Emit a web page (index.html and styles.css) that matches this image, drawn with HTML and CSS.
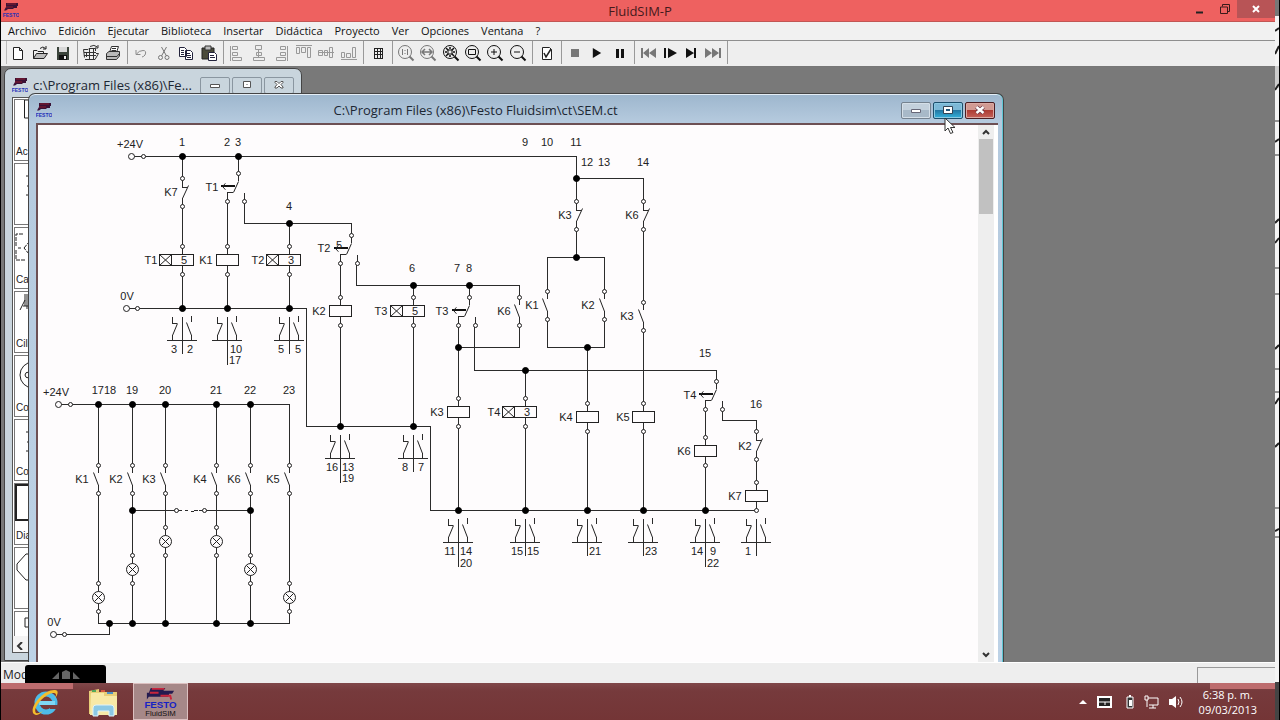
FILE: index.html
```html
<!DOCTYPE html>
<html lang="es">
<head>
<meta charset="utf-8">
<title>FluidSIM-P</title>
<link rel="stylesheet" href="styles.css">
</head>
<body>
<svg class="defs" aria-hidden="true">
  <defs>
    <symbol id="logo" viewBox="0 0 16 16">
      <path d="M3 1H15V4H14V6H11L10 7H5L3 8.500H1L3 5Z" fill="#3a1236"/>
      <path d="M4 2H13M3 5H10" stroke="#8a1c2c" stroke-width="1"/>
      <text x="8" y="15" text-anchor="middle" class="logo-text">FESTO</text>
    </symbol>
    <symbol id="i-new" viewBox="0 0 18 18"><path d="M4.500 3.500H10.500L13.500 6.500V15.500H4.500ZM10.500 3.500V6.500H13.500" fill="#fff" stroke="#222"/></symbol>
    <symbol id="i-open" viewBox="0 0 18 18"><path d="M2.500 14.500V6.500H6L7 7.500H12.500V9.500" fill="#eee" stroke="#222"/><path d="M2.500 14.500L5.500 9.500H16.500L13 14.500Z" fill="#bbb" stroke="#222"/><path d="M9 4.500Q12 1.500 14.500 4.500M15 2V5H12" fill="none" stroke="#222"/></symbol>
    <symbol id="i-save" viewBox="0 0 18 18"><path d="M3 3H15V16H3Z" fill="#3b443b"/><path d="M5 3H13V8H5Z" fill="#d8d8d8"/><path d="M5 11H13V16H5Z" fill="#111"/><path d="M10 12H12V15H10Z" fill="#eee"/></symbol>
    <symbol id="i-lib" viewBox="0 0 18 18"><path d="M2.500 13.500L1.500 5.500H6L7 4.500H13.500V7M4.500 8V13M7.500 5V16M11.500 5V16M2 8.500H14M2 11.500H14" fill="none" stroke="#333"/><path d="M3 15.500H13L16.500 9.500H14" fill="none" stroke="#333"/><path d="M8 2.500Q12 0 15.500 3M16 1V4H13" fill="none" stroke="#333"/></symbol>
    <symbol id="i-print" viewBox="0 0 18 18"><path d="M5.500 8.500L7.500 2.500H14.500L12.500 8.500" fill="#fff" stroke="#333"/><path d="M2.500 9.500L5 7.500H15.500V12L12.500 15.500H2.500Z" fill="#bbb" stroke="#333"/><path d="M3 12.500H13L15 10M8 4.500H12M7.500 6.500H12" stroke="#333" fill="none"/></symbol>
    <symbol id="i-undo" viewBox="0 0 18 18"><path d="M4 6V10.500H8.500M4.500 10Q7 6.500 11 6.500T13 11Q12 12.500 10 13" fill="none" stroke="#8a8a8a"/></symbol>
    <symbol id="i-cut" viewBox="0 0 18 18"><path d="M6.500 3L11.500 12M11.500 3L6.500 12" fill="none" stroke="#777"/><circle cx="5.500" cy="13.500" r="2" fill="none" stroke="#777"/><circle cx="12" cy="13.500" r="2" fill="none" stroke="#777"/></symbol>
    <symbol id="i-copy" viewBox="0 0 18 18"><path d="M2.500 3.500H7.500L9.500 5.500V12.500H2.500ZM8.500 6.500H13.500L15.500 8.500V15.500H8.500Z" fill="#fff" stroke="#23233c"/><path d="M4 6.500H7M4 8.500H7M4 10.500H7M10 9.500H13M10 11.500H14M10 13.500H14" stroke="#23233c"/></symbol>
    <symbol id="i-paste" viewBox="0 0 18 18"><path d="M2 4H14V15H2Z" fill="#4a4a3a" stroke="#222"/><path d="M5 2H11V6H5Z" fill="#bbb" stroke="#333"/><path d="M8.500 8.500H14.500L16.500 10.500V16.500H8.500Z" fill="#fff" stroke="#23233c"/><path d="M10 11.500H14M10 13.500H15" stroke="#23233c"/></symbol>
    <symbol id="i-al" viewBox="0 0 18 18"><path d="M2.500 2V17M4.500 2.500H9.500V5.500H4.500ZM4.500 8.500H9.500V11.500H4.500ZM4.500 13.500H13.500V16.500H4.500Z" fill="none" stroke="#999"/></symbol>
    <symbol id="i-ac" viewBox="0 0 18 18"><path d="M8.500 5V14M5.500 1.500H11.500V5.500H5.500ZM6.500 8.500H11.500V11.500H6.500ZM3.500 13.500H14.500V16.500H3.500Z" fill="none" stroke="#999"/></symbol>
    <symbol id="i-ar" viewBox="0 0 18 18"><path d="M14.500 2V17M7.500 2.500H12.500V5.500H7.500ZM7.500 8.500H12.500V11.500H7.500ZM3.500 13.500H12.500V16.500H3.500Z" fill="none" stroke="#999"/></symbol>
    <symbol id="i-at" viewBox="0 0 18 18"><path d="M1 1.500H17M1.500 3.500H4.500V9.500H1.500ZM6.500 3.500H10.500V8.500H6.500ZM12.500 3.500H15.500V13.500H12.500Z" fill="none" stroke="#999"/></symbol>
    <symbol id="i-am" viewBox="0 0 18 18"><path d="M1 8.500H17M1.500 6.500H5.500V11.500H1.500ZM7.500 6.500H10.500V11.500H7.500ZM12.500 3.500H15.500V13.500H12.500Z" fill="none" stroke="#999"/></symbol>
    <symbol id="i-ab" viewBox="0 0 18 18"><path d="M1 15.500H17M1.500 8.500H4.500V13.500H1.500ZM6.500 9.500H10.500V13.500H6.500ZM12.500 3.500H15.500V13.500H12.500Z" fill="none" stroke="#999"/></symbol>
    <symbol id="i-grid" viewBox="0 0 18 18"><path d="M5.500 4V15M8.500 4V15M11.500 4V15M13.500 4V15M5 4.500H14M5 7.500H14M5 10.500H14M5 14.500H14" stroke="#222"/></symbol>
    <symbol id="lens" viewBox="0 0 18 18"><circle cx="8" cy="8" r="6.500" fill="none" stroke="currentColor"/><path d="M12.500 12.500L16.500 16.500" stroke="currentColor" stroke-width="2"/></symbol>
    <symbol id="arrow" viewBox="0 0 10 12"><path d="M0 0L10 6L0 12Z" fill="currentColor"/></symbol>
    <!-- circuit parts; each origin is the upper (or lower left) terminal -->
    <circle id="ring" r="2" class="port"/>
    <circle id="feed" r="3" class="port"/>
    <circle id="dot" r="3" class="node"/>
    <g id="no"><path class="wire" d="M0 0V8M0 20V28"/><path class="fine" d="M-5 7L0 20"/><use href="#ring"/><use href="#ring" y="28"/></g>
    <g id="nc"><path class="wire" d="M0 0V9H5M0 20V28"/><path class="fine" d="M6 7L0 20"/><use href="#ring"/><use href="#ring" y="28"/></g>
    <g id="ends"><path class="wire" d="M0 -14V14"/><use href="#ring" y="-14"/><use href="#ring" y="14"/></g>
    <g id="coil"><use href="#ends"/><path class="part" d="M-11 -6H11V5H-11Z"/></g>
    <g id="tcoil"><use href="#ends"/><path class="part" d="M-23 -6H11V5H-23ZM-11 -6V5"/><path class="fine" d="M-23 -6L-11 5M-11 -6L-23 5"/></g>
    <g id="tcon"><path class="wire" d="M11 -28V-20M6 -9H0V0M17 -8V0"/><path class="fine" d="M11 -20L6 -9"/><path class="bar" d="M-6 -15H8"/><path class="fine" d="M-2 -18Q-7 -15 -2 -12"/><use href="#ring"/><use href="#ring" x="17"/><use href="#ring" x="11" y="-28"/></g>
    <g id="lamp"><use href="#ends"/><circle class="port" r="6"/><path class="fine" d="M-4 -4L4 4M4 -4L-4 4"/></g>
    <g id="xref"><path class="wire" d="M0 9V46M-15 32H15M-10 9V15H-5M-10 27V32M9 27V32M9 8V14"/><path class="fine" d="M-5 15L-10 27M4 14L9 27"/></g>
    <g id="xrefl"><use href="#xref"/><path class="wire" d="M0 46V57"/></g>
  </defs>
</svg>

<div class="desktop">
  <main class="app">
    <header class="titlebar">
      <svg class="logo"><use href="#logo"/></svg>
      <h1>FluidSIM-P</h1>
      <div class="caption">
        <button aria-label="Minimizar"><svg width="10" height="10"><path d="M1 8.500H8" stroke="#222" stroke-width="2"/></svg></button>
        <button aria-label="Restaurar"><svg width="12" height="12"><path d="M1.500 4H8.500V10.500H1.500ZM3.500 3.500V1.500H10.500V8.500H9" fill="none" stroke="#3a1a1a"/></svg></button>
        <button class="close" aria-label="Cerrar"><svg width="10" height="10"><path d="M2 2L8 8M8 2L2 8" stroke="#fff" stroke-width="2"/></svg></button>
      </div>
    </header>
    <nav class="menubar">
      <button>Archivo</button><button>Edición</button><button>Ejecutar</button><button>Biblioteca</button><button>Insertar</button><button>Didáctica</button><button>Proyecto</button><button>Ver</button><button>Opciones</button><button>Ventana</button><button>?</button>
    </nav>
    <div class="toolbar">
      <div class="group g3 first"><button aria-label="Nuevo"><svg><use href="#i-new"/></svg></button><button aria-label="Abrir"><svg><use href="#i-open"/></svg></button><button aria-label="Guardar"><svg><use href="#i-save"/></svg></button></div>
      <div class="group g2"><button aria-label="Vista previa"><svg><use href="#i-lib"/></svg></button><button aria-label="Imprimir"><svg><use href="#i-print"/></svg></button></div>
      <div class="group g4"><button aria-label="Deshacer"><svg><use href="#i-undo"/></svg></button><button aria-label="Cortar"><svg><use href="#i-cut"/></svg></button><button aria-label="Copiar"><svg><use href="#i-copy"/></svg></button><button aria-label="Pegar"><svg><use href="#i-paste"/></svg></button></div>
      <div class="group g6"><button aria-label="Alinear izquierda"><svg><use href="#i-al"/></svg></button><button aria-label="Centrar"><svg><use href="#i-ac"/></svg></button><button aria-label="Alinear derecha"><svg><use href="#i-ar"/></svg></button><button aria-label="Alinear arriba"><svg><use href="#i-at"/></svg></button><button aria-label="Alinear al medio"><svg><use href="#i-am"/></svg></button><button aria-label="Alinear abajo"><svg><use href="#i-ab"/></svg></button></div>
      <div class="group g1"><button aria-label="Cuadrícula"><svg><use href="#i-grid"/></svg></button></div>
      <div class="group g6">
        <button class="off" aria-label="Escala 1:1"><svg viewBox="0 0 18 18"><use href="#lens"/><path d="M5.500 5V11M10.500 5V11M8 6V7M8 9V10" stroke="currentColor"/></svg></button>
        <button class="off" aria-label="Zoom anterior"><svg viewBox="0 0 18 18"><use href="#lens"/><path d="M3 8H13M6 5L3 8L6 11M10 5L13 8L10 11" fill="none" stroke="currentColor" stroke-width="1.500"/></svg></button>
        <button aria-label="Ajustar"><svg viewBox="0 0 18 18"><use href="#lens"/><path d="M4 4L12 12M12 4L4 12M3 8H5M11 8H13M8 3V5M8 11V13" stroke="currentColor" stroke-width="1.500"/><path d="M6 6H10V10H6Z" fill="#eee" stroke="currentColor"/></svg></button>
        <button aria-label="Zoom a zona"><svg viewBox="0 0 18 18"><use href="#lens"/><path d="M4.500 5.500H11.500V10.500H4.500Z" fill="none" stroke="currentColor"/></svg></button>
        <button aria-label="Acercar"><svg viewBox="0 0 18 18"><use href="#lens"/><path d="M5 8H11M8 5V11" stroke="currentColor"/></svg></button>
        <button aria-label="Alejar"><svg viewBox="0 0 18 18"><use href="#lens"/><path d="M5 8H11" stroke="currentColor"/></svg></button>
      </div>
      <div class="group g1"><button aria-label="Comprobar"><svg viewBox="0 0 18 18"><path d="M4.500 3.500H11.500L13.500 5.500V15.500H4.500Z" fill="#fff" stroke="#222"/><path d="M6 9L8 13L13 5" fill="none" stroke="#222" stroke-width="1.500"/></svg></button></div>
      <div class="group g3b">
        <button class="off" aria-label="Parar"><svg viewBox="0 0 18 18"><path d="M5 5H13V13H5Z" fill="currentColor"/></svg></button>
        <button aria-label="Iniciar"><svg viewBox="0 0 18 18"><use href="#arrow" x="4" y="4" width="10" height="10"/></svg></button>
        <button aria-label="Pausa"><svg viewBox="0 0 18 18"><path d="M5 5H8V14H5ZM10 5H13V14H10Z" fill="currentColor"/></svg></button>
      </div>
      <div class="group g4b">
        <button class="off" aria-label="Reiniciar"><svg viewBox="0 0 18 18"><path d="M2 4H4V14H2ZM10 4V14L4 9ZM17 4V14L10 9Z" fill="currentColor"/></svg></button>
        <button aria-label="Paso"><svg viewBox="0 0 18 18"><path d="M3 4H5V14H3ZM7 4V14L16 9Z" fill="currentColor"/></svg></button>
        <button aria-label="Hasta cambio"><svg viewBox="0 0 18 18"><path d="M4 4V14L12 9ZM12 4H14V14H12Z" fill="currentColor"/></svg></button>
        <button class="off" aria-label="Siguiente"><svg viewBox="0 0 18 18"><path d="M1 4V14L8 9ZM8 4V14L15 9ZM15 4H17V14H15Z" fill="currentColor"/></svg></button>
      </div>
    </div>

    <section class="mdi">
      <section class="window palette">
        <header>
          <svg class="logo"><use href="#logo"/></svg>
          <h2>c:\Program Files (x86)\Fe...</h2>
          <div class="wbuttons">
            <button aria-label="Minimizar"><svg width="12" height="8"><path d="M1.500 3.500H10.500V6.500H1.500Z" fill="#fff" stroke="#555"/></svg></button>
            <button aria-label="Maximizar"><svg width="12" height="10"><path d="M2.500 1.500H9.500V7.500H2.500ZM5.500 4.500H6.500" fill="#fff" stroke="#555"/></svg></button>
            <button aria-label="Cerrar"><svg width="12" height="10"><path d="M2 1.500H4L6 3.500L8 1.500H10V2.500L8 4.500L10 7V8H8L6 6L4 8H2V7L4 4.500L2 2.500Z" fill="#fff" stroke="#555"/></svg></button>
          </div>
        </header>
        <div class="client">
          <ul>
            <li><svg viewBox="0 0 60 44"><path d="M9.500 0V18H40V0Z"/></svg><span>Ac</span></li>
            <li><svg viewBox="0 0 60 44"><path d="M11 12H20M12 22H20M11 31H20"/></svg></li>
            <li><svg viewBox="0 0 60 44"><path d="M8 6H1V18M1 22V32H10M3 20H6M9 20L14 14V26Z" stroke-dasharray="4 1"/></svg><span>Ca</span></li>
            <li><svg viewBox="0 0 60 44"><path d="M9 3H14M10 4V14M12 4V17M8 14H14M5 18L10 8"/></svg><span>Cili</span></li>
            <li><svg viewBox="0 0 60 44"><circle cx="18" cy="19" r="13"/><path d="M14 16Q10 16 10 19T14 22"/></svg><span>Co</span></li>
            <li><svg viewBox="0 0 60 44"><path d="M11 12H20M12 22H20M11 31H20"/></svg><span>Co</span></li>
            <li class="picked"><svg viewBox="0 0 60 44"><path d="M1 1H50V36H1Z" stroke-width="2"/></svg><span>Dia</span></li>
            <li><svg viewBox="0 0 60 44"><path d="M20 6H11L2 16V22L11 32H20"/></svg></li>
            <li><svg viewBox="0 0 60 44"><path d="M20 6H10V15H20"/></svg></li>
          </ul>
          <button class="scroll-left" aria-label="Desplazar a la izquierda"><svg width="8" height="8"><path d="M6 0L2 4L6 8" fill="none" stroke="#333" stroke-width="2"/></svg></button>
        </div>
      </section>

      <section class="window main">
        <header>
          <svg class="logo"><use href="#logo"/></svg>
          <h2>C:\Program Files (x86)\Festo Fluidsim\ct\SEM.ct</h2>
          <div class="wbuttons">
            <button aria-label="Minimizar"><svg width="12" height="8"><path d="M1.500 3.500H10.500V6.500H1.500Z" fill="#fff" stroke="#667"/></svg></button>
            <button class="hot" aria-label="Maximizar"><svg width="12" height="10"><path d="M1.500 1.500H10.500V8.500H1.500Z" fill="#fff" stroke="#345"/><path d="M4 4H8V6H4Z" fill="#257"/></svg></button>
            <button class="close" aria-label="Cerrar"><svg width="12" height="10"><path d="M2.500 2L9.500 8M9.500 2L2.500 8" stroke="#634" stroke-width="4"/><path d="M2.500 2L9.500 8M9.500 2L2.500 8" stroke="#fff" stroke-width="2.500"/></svg></button>
          </div>
        </header>
        <div class="client">
          <div class="sheet">
            <svg class="circuit" viewBox="38 125 942 537" role="img" aria-label="Circuito eléctrico">
              <path class="wire" d="M131 156H576V178H643V201M182 156V178M182 206V308M238 156V173M227 201V308M244 201V223H351V235M289 223V308M126 308H306V426H430V510H756V482M340 263V426M356 263V285H519V297M413 285V426M469 285V297M519 325V347H458M458 325V510M474 325V370H716V381M525 370V510M576 178V201M576 229V257M547 291V257H604V291M547 319V347H604V319M587 347V510M643 229V302M643 330V510M705 409V510M722 409V420H756V431M756 459V482"/>
              <path class="wire" d="M58 404H289V465M98 404V465M132 404V465M165 404V465M216 404V465M250 404V465M98 493V623H289V493M132 493V623M165 493V623M216 493V623M250 493V623M53 634H109V623M132 510H182M185 510H188M191 511H194M194 510H198M199 510H250"/>
              <use href="#feed" x="131" y="156"/><use href="#ring" x="143" y="156"/>
              <use href="#feed" x="126" y="308"/><use href="#ring" x="137" y="308"/>
              <use href="#feed" x="58" y="404"/><use href="#ring" x="70" y="404"/>
              <use href="#feed" x="53" y="634"/><use href="#ring" x="64" y="634"/>
              <use href="#ring" x="176" y="510"/><use href="#ring" x="204" y="510"/>
              <use href="#nc" x="182" y="178"/><use href="#nc" x="576" y="201"/><use href="#nc" x="643" y="201"/><use href="#nc" x="756" y="431"/>
              <use href="#no" x="519" y="297"/><use href="#no" x="547" y="291"/><use href="#no" x="604" y="291"/><use href="#no" x="643" y="302"/>
              <use href="#no" x="98" y="465"/><use href="#no" x="132" y="465"/><use href="#no" x="165" y="465"/><use href="#no" x="216" y="465"/><use href="#no" x="250" y="465"/><use href="#no" x="289" y="465"/>
              <use href="#tcon" x="227" y="201"/><use href="#tcon" x="340" y="263"/><use href="#tcon" x="458" y="325"/><use href="#tcon" x="705" y="409"/>
              <use href="#tcoil" x="182" y="260"/><use href="#tcoil" x="289" y="260"/><use href="#tcoil" x="413" y="311"/><use href="#tcoil" x="525" y="412"/>
              <use href="#coil" x="227" y="260"/><use href="#coil" x="340" y="311"/><use href="#coil" x="458" y="412"/><use href="#coil" x="587" y="417"/><use href="#coil" x="643" y="417"/><use href="#coil" x="705" y="451"/><use href="#coil" x="756" y="496"/>
              <use href="#lamp" x="98" y="597"/><use href="#lamp" x="132" y="569"/><use href="#lamp" x="165" y="541"/><use href="#lamp" x="216" y="541"/><use href="#lamp" x="250" y="569"/><use href="#lamp" x="289" y="597"/>
              <use href="#xref" x="182" y="308"/><use href="#xrefl" x="227" y="308"/><use href="#xref" x="289" y="308"/><use href="#xrefl" x="340" y="426"/><use href="#xref" x="413" y="426"/><use href="#xrefl" x="458" y="510"/><use href="#xref" x="525" y="510"/><use href="#xref" x="587" y="510"/><use href="#xref" x="643" y="510"/><use href="#xrefl" x="705" y="510"/><use href="#xref" x="756" y="510"/>
              <use href="#dot" x="182" y="156"/><use href="#dot" x="238" y="156"/><use href="#dot" x="289" y="223"/><use href="#dot" x="182" y="308"/><use href="#dot" x="227" y="308"/><use href="#dot" x="289" y="308"/><use href="#dot" x="340" y="426"/><use href="#dot" x="413" y="426"/><use href="#dot" x="413" y="285"/><use href="#dot" x="469" y="285"/><use href="#dot" x="458" y="347"/><use href="#dot" x="525" y="370"/><use href="#dot" x="576" y="178"/><use href="#dot" x="576" y="257"/><use href="#dot" x="587" y="347"/><use href="#dot" x="458" y="510"/><use href="#dot" x="525" y="510"/><use href="#dot" x="587" y="510"/><use href="#dot" x="643" y="510"/><use href="#dot" x="705" y="510"/>
              <use href="#dot" x="98" y="404"/><use href="#dot" x="132" y="404"/><use href="#dot" x="165" y="404"/><use href="#dot" x="216" y="404"/><use href="#dot" x="250" y="404"/><use href="#dot" x="132" y="510"/><use href="#dot" x="250" y="510"/><use href="#dot" x="109" y="623"/><use href="#dot" x="132" y="623"/><use href="#dot" x="165" y="623"/><use href="#dot" x="216" y="623"/><use href="#dot" x="250" y="623"/>
              <g class="num">
                <text x="130" y="148">+24V</text><text x="182" y="146">1</text><text x="227" y="146">2</text><text x="238" y="146">3</text><text x="525" y="146">9</text><text x="547" y="146">10</text><text x="576" y="146">11</text>
                <text x="587" y="166">12</text><text x="604" y="166">13</text><text x="643" y="166">14</text>
                <text x="289" y="210">4</text><text x="412" y="272">6</text><text x="457" y="272">7</text><text x="469" y="272">8</text><text x="705" y="357">15</text><text x="756" y="408">16</text>
                <text x="127" y="300">0V</text><text x="56" y="396">+24V</text><text x="54" y="626">0V</text>
                <text x="104" y="394">1718</text><text x="132" y="394">19</text><text x="165" y="394">20</text><text x="216" y="394">21</text><text x="250" y="394">22</text><text x="289" y="394">23</text>
                <text x="184" y="264">5</text><text x="291" y="264">3</text><text x="415" y="315">5</text><text x="527" y="416">3</text><text x="339" y="249">5</text>
                <text x="174" y="353">3</text><text x="190" y="353">2</text><text x="236" y="353">10</text><text x="235" y="364">17</text><text x="281" y="353">5</text><text x="298" y="353">5</text>
                <text x="332" y="471">16</text><text x="348" y="471">13</text><text x="348" y="482">19</text><text x="405" y="471">8</text><text x="421" y="471">7</text>
                <text x="450" y="555">11</text><text x="466" y="555">14</text><text x="466" y="567">20</text><text x="517" y="555">15</text><text x="533" y="555">15</text><text x="595" y="555">21</text><text x="651" y="555">23</text><text x="697" y="555">14</text><text x="713" y="555">9</text><text x="713" y="567">22</text><text x="748" y="555">1</text>
                <text x="171" y="196">K7</text><text x="212" y="191">T1</text><text x="151" y="264">T1</text><text x="206" y="264">K1</text><text x="258" y="264">T2</text><text x="324" y="252">T2</text><text x="319" y="315">K2</text><text x="381" y="315">T3</text><text x="442" y="315">T3</text><text x="504" y="315">K6</text><text x="532" y="309">K1</text><text x="588" y="309">K2</text><text x="565" y="219">K3</text><text x="632" y="219">K6</text><text x="627" y="320">K3</text>
                <text x="437" y="416">K3</text><text x="494" y="416">T4</text><text x="566" y="421">K4</text><text x="623" y="421">K5</text><text x="690" y="399">T4</text><text x="684" y="455">K6</text><text x="745" y="450">K2</text><text x="735" y="500">K7</text>
                <text x="82" y="483">K1</text><text x="116" y="483">K2</text><text x="149" y="483">K3</text><text x="200" y="483">K4</text><text x="234" y="483">K6</text><text x="273" y="483">K5</text>
              </g>
            </svg>
          </div>
          <div class="scrollbar">
            <button aria-label="Subir"><svg width="8" height="6"><path d="M1 5L4 2L7 5" fill="none" stroke="#333" stroke-width="2"/></svg></button>
            <div class="thumb"></div>
            <button aria-label="Bajar"><svg width="8" height="6"><path d="M1 1L4 4L7 1" fill="none" stroke="#333" stroke-width="2"/></svg></button>
          </div>
        </div>
      </section>
      <svg class="cursor" viewBox="0 0 12 18"><path d="M1 1V14L4 11L6.500 16.500L9 15.500L6.500 10.500H11Z" fill="#fff" stroke="#333"/></svg>
    </section>

    <footer class="status"><span>Mod</span><div class="pane"></div>
      <div class="tab"><svg width="28" height="9"><path d="M0 9L7 2V9ZM10 9V2L14 0L18 2V9ZM21 2L28 9H21Z" fill="#666"/></svg></div>
    </footer>
    <footer class="taskbar">
      <div class="glow left"></div><div class="glow right"></div>
      <button aria-label="Internet Explorer"><svg viewBox="0 0 32 32"><circle cx="17" cy="17" r="9" fill="none" stroke="#4dbbe8" stroke-width="5"/><path d="M10 17H26" stroke="#7fd6f4" stroke-width="4"/><path d="M20 19H30V23H21Z" fill="#773a3c"/><path d="M5 28C-1 23 14 3 26 4C30 4 29 9 26 12C28 8 27 7 24 7C15 8 3 23 7 27C9 28 12 26 14 25C10 29 7 30 5 28Z" fill="#f4bd2c"/></svg></button>
      <button aria-label="Explorador"><svg viewBox="0 0 32 32"><path d="M2 5L12 3V6H30V28H2Z" fill="#e9cf78"/><path d="M4 7H17V10H30V29H3Z" fill="#f8e9a6"/><path d="M5 4H9V6H5Z" fill="#55a95c"/><path d="M20 6H26V8H20Z" fill="#4b93c8"/><path d="M14 4H18V6H14Z" fill="#d65b42"/><path d="M6 30V22Q6 19 9 19H24Q27 19 27 22V30H22V25H11V30Z" fill="#8cc9e5" stroke="#e0f3fa"/></svg></button>
      <button class="active" aria-label="FluidSIM"><svg viewBox="0 0 54 36"><path d="M17 4H32L30 7H41L39 10H36L35 13H15L13 16V9H15Z" fill="#241b50"/><path d="M18 5H31M16 9H25M27 12H37L38 16" stroke="#c8263c" stroke-width="2" fill="none"/><text x="27" y="25" class="festo">FESTO</text><text x="27" y="33" class="fluid">FluidSIM</text></svg></button>
      <div class="tray">
        <svg width="8" height="5"><path d="M0 5L4 1L8 5Z" fill="#fff"/></svg>
        <svg class="wide" width="15" height="12"><path d="M1 1H14V11H1Z" fill="#222" stroke="#fff" stroke-width="2"/><path d="M1 6H14M8 6V9" stroke="#fff"/></svg>
        <svg width="8" height="14"><path d="M1 2H7V13H1Z" fill="#333" stroke="#fff" stroke-width="1"/><path d="M3 0H5V2H3ZM3 5H6V11H3Z" fill="#fff"/></svg>
        <svg width="15" height="14"><path d="M4 3H14V10H5M9 10V13M5 13H12M1 1H4V5H1ZM3 5V12" fill="none" stroke="#fff"/></svg>
        <svg width="14" height="14"><path d="M0 4H3L7 1V13L3 10H0Z" fill="#fff"/><path d="M9 4Q11 7 9 10M11 2Q15 7 11 12" fill="none" stroke="#fff"/></svg>
        <time>6:38 p. m.<br>09/03/2013</time>
      </div>
    </footer>
  </main>
  <aside class="edge"><svg viewBox="0 0 4 720" preserveAspectRatio="none"><path d="M0 0H4V16H0Z" fill="#777"/><path d="M0 66H4V88H0Z" fill="#ccc"/><path d="M0 121H4M0 155H4M0 268H4M0 294H4M0 369H4M0 392H4M0 508H4M0 537H4" stroke="#333"/><path d="M0 31L4 28M0 54L4 46M0 90L4 84M0 142L4 139M0 223L4 219M0 243L4 238M0 349L4 345M0 404L4 398M0 447L4 443M0 531L4 529" stroke="#222" stroke-width="2"/><path d="M0 682H4V720H0Z" fill="#444"/></svg></aside>
</div>
</body>
</html>
```
FILE: styles.css
```css
* { box-sizing: border-box; }
body { margin: 0; background: #000; font-family: "Open Sans", "Liberation Sans", sans-serif; color: #222; }
button { border: 0; padding: 0; margin: 0; background: none; font: inherit; color: inherit; }
h1, h2, ul { margin: 0; padding: 0; font-weight: 400; list-style: none; }
.defs { position: absolute; width: 0; height: 0; }
.desktop { display: flex; height: 100vh; padding: 0 1px; overflow: hidden; }
.app { flex: 1; min-width: 0; display: flex; flex-direction: column; }
.edge { width: 4px; background: #f4f4f4; }
.edge svg { display: block; width: 100%; height: 100%; }
.logo { width: 16px; height: 16px; flex: none; overflow: visible; }
.logo-text { font: bold 5px "Liberation Sans", sans-serif; fill: #2430b8; }

.titlebar { display: grid; grid-template-columns: 1fr auto 1fr; height: 22px; background: #ee6160; border-bottom: 1px solid #c25654; }
.titlebar .logo { margin: 2px; }
.titlebar h1 { padding-left: 4px; font-size: 13px; line-height: 22px; color: #451a1c; }
.caption { display: flex; justify-content: flex-end; align-items: flex-start; }
.caption button { width: 25px; height: 18px; display: grid; place-items: center; }
.caption .close { width: 38px; background: #b85456; }

.menubar { display: flex; height: 19px; padding-left: 1px; background: #f1f1f1; border-bottom: 1px solid #8e8e8e; }
.menubar button { padding: 0 6px; font-size: 11px; line-height: 18px; color: #111; white-space: nowrap; }

.toolbar { display: flex; height: 26px; padding: 0 0 2px 5px; background: #eee; border-bottom: 1px solid #777; }
.group { display: flex; flex: none; padding: 0 3px 0 2px; border-right: 1px solid #999; }
.group button { flex: 1; display: grid; place-items: center; color: #111; }
.group .off { color: #777; }
.group svg { width: 18px; height: 18px; }
.g1 { width: 29px; }
.g2 { width: 50px; }
.g3 { width: 72px; }
.g3b { width: 73px; }
.g4 { width: 96px; }
.g4b { width: 93px; }
.g6 { width: 140px; }
.first { padding-left: 0; border-left: 1px solid #bbb; }

.mdi { flex: 1; min-height: 0; position: relative; overflow: hidden; background: #797979; }
.window { position: absolute; display: flex; flex-direction: column; border: 1px solid #444; border-radius: 7px 7px 0 0; }
.window header { display: flex; flex: none; align-items: center; }
.window h2 { font-size: 13px; line-height: 20px; white-space: nowrap; color: #1c2733; }
.wbuttons { display: flex; gap: 2px; }
.wbuttons button { width: 30px; height: 17px; display: grid; place-items: center; border: 1px solid #75828f; border-radius: 2px; background: linear-gradient(#c3d0dc 50%, #a8b9c8 50%); box-shadow: inset 0 0 0 1px #d5dfe8; }
.wbuttons .hot { border-color: #1d4f6c; background: linear-gradient(#7db8d6 45%, #2378a4 50%, #34b2dc); box-shadow: inset 0 0 0 1px #8bc9e2; }
.wbuttons .close { border-color: #4b1d22; background: linear-gradient(#d19a93 45%, #ad3c34 50%, #c4625a); box-shadow: inset 0 0 0 1px #dba9a3; }

.palette { left: 3px; top: 1px; width: 298px; bottom: 1px; padding: 0 7px 7px; background: #c9d5dd; }
.palette header { height: 28px; gap: 5px; padding-top: 4px; }
.palette header h2 { flex: 1; }
.palette .wbuttons button { background: none; border-color: #8a96a0; box-shadow: none; }
.palette .client { flex: 1; min-height: 0; display: flex; flex-direction: column; border: 1px solid #555; background: #f4f4f4; }
.palette ul { flex: 1; min-height: 0; display: flex; flex-direction: column; gap: 2px; padding: 1px; overflow: hidden; background: #fff; }
.palette li { flex: none; height: 62px; border: 1px solid #777; background: #fff; }
.palette li svg { display: block; width: 60px; height: 44px; fill: none; stroke: #222; }
.palette li span { display: block; padding-left: 1px; font: 10px/16px "Liberation Sans", sans-serif; }
.palette .scroll-left { height: 16px; padding-left: 3px; text-align: left; line-height: 14px; }

.main { left: 27px; top: 26px; width: 976px; bottom: 0; border-bottom: 0; padding: 0 5px 0 7px; background: linear-gradient(#9db6cd, #b5cade 28px, #bdd2e6); box-shadow: inset -1px 0 #5fc6d4, inset 0 1px #e5eef6; }
.main header { display: grid; grid-template-columns: 1fr auto 1fr; height: 29px; padding: 3px 3px 0 0; }
.main header .wbuttons { justify-self: end; }
.main h2 { padding-right: 80px; }
.main .client { flex: 1; min-height: 0; display: flex; border: solid #6d5054; border-width: 2px 0 0 2px; background: #fff; }
.sheet { flex: 1; min-width: 0; overflow: hidden; background: #fefcfd; }
.scrollbar { width: 17px; margin-right: 3px; padding: 0 1px; display: flex; flex-direction: column; background: #eee; border-right: 1px solid #fff; }
.scrollbar button { height: 14px; display: grid; place-items: center; }
.scrollbar .thumb { height: 75px; margin-bottom: auto; background: #c1c1c1; }

.circuit { display: block; width: 942px; height: 537px; }
.wire, .part, .bar { shape-rendering: crispEdges; }
.wire { fill: none; stroke: #2b2b2b; }
.part, .port { fill: #fefcfd; stroke: #222; }
.port, .node, .fine { transform: translate(0.5px, 0.5px); }
.bar { stroke: #111; stroke-width: 2; }
.node { fill: #000; stroke: #000; }
.fine { fill: none; stroke: #222; }
.num { font: 11px "Liberation Sans", Arial, sans-serif; text-anchor: middle; fill: #222; }
.cursor { position: absolute; left: 943px; top: 50px; width: 12px; height: 18px; }

.status { position: relative; display: flex; justify-content: space-between; flex: none; height: 21px; padding-top: 4px; background: #eee; border-top: 1px solid #fff; font-size: 12px; line-height: 16px; }
.status span { padding-left: 2px; }
.pane { width: 78px; border: solid #999; border-width: 1px 0 0 1px; }
.tab { position: absolute; left: 24px; top: 2px; width: 81px; height: 18px; display: grid; place-items: center; border-radius: 3px 3px 0 0; background: #000; }

.taskbar { position: relative; display: flex; flex: none; align-items: stretch; height: 37px; padding-left: 15px; background: linear-gradient(#80484a, #763a3c 8px, #743536); }
.taskbar button { width: 58px; display: grid; place-items: center; position: relative; }
.taskbar button svg { width: 32px; height: 32px; }
.taskbar .active { width: 55px; margin: 0 1px; border: 1px solid #dcc0c0; background: #a68888; }
.taskbar .active svg { width: 53px; height: 35px; }
.festo { font: bold 10px "Liberation Sans", sans-serif; fill: #1722c4; text-anchor: middle; }
.fluid { font: 8px "Liberation Sans", sans-serif; fill: #111; text-anchor: middle; }
.glow { position: absolute; top: 0; height: 6px; background: #bd6c6e; }
.glow.left { left: 0; width: 72px; }
.glow.right { right: 0; width: 65px; }
.tray { position: relative; display: flex; align-items: center; gap: 10px; margin-left: auto; padding-right: 18px; }
.tray svg { flex: none; }
.tray .wide { margin-right: 4px; }
.tray time { padding-left: 6px; font-size: 11px; line-height: 15px; color: #fff; text-align: center; }
```
